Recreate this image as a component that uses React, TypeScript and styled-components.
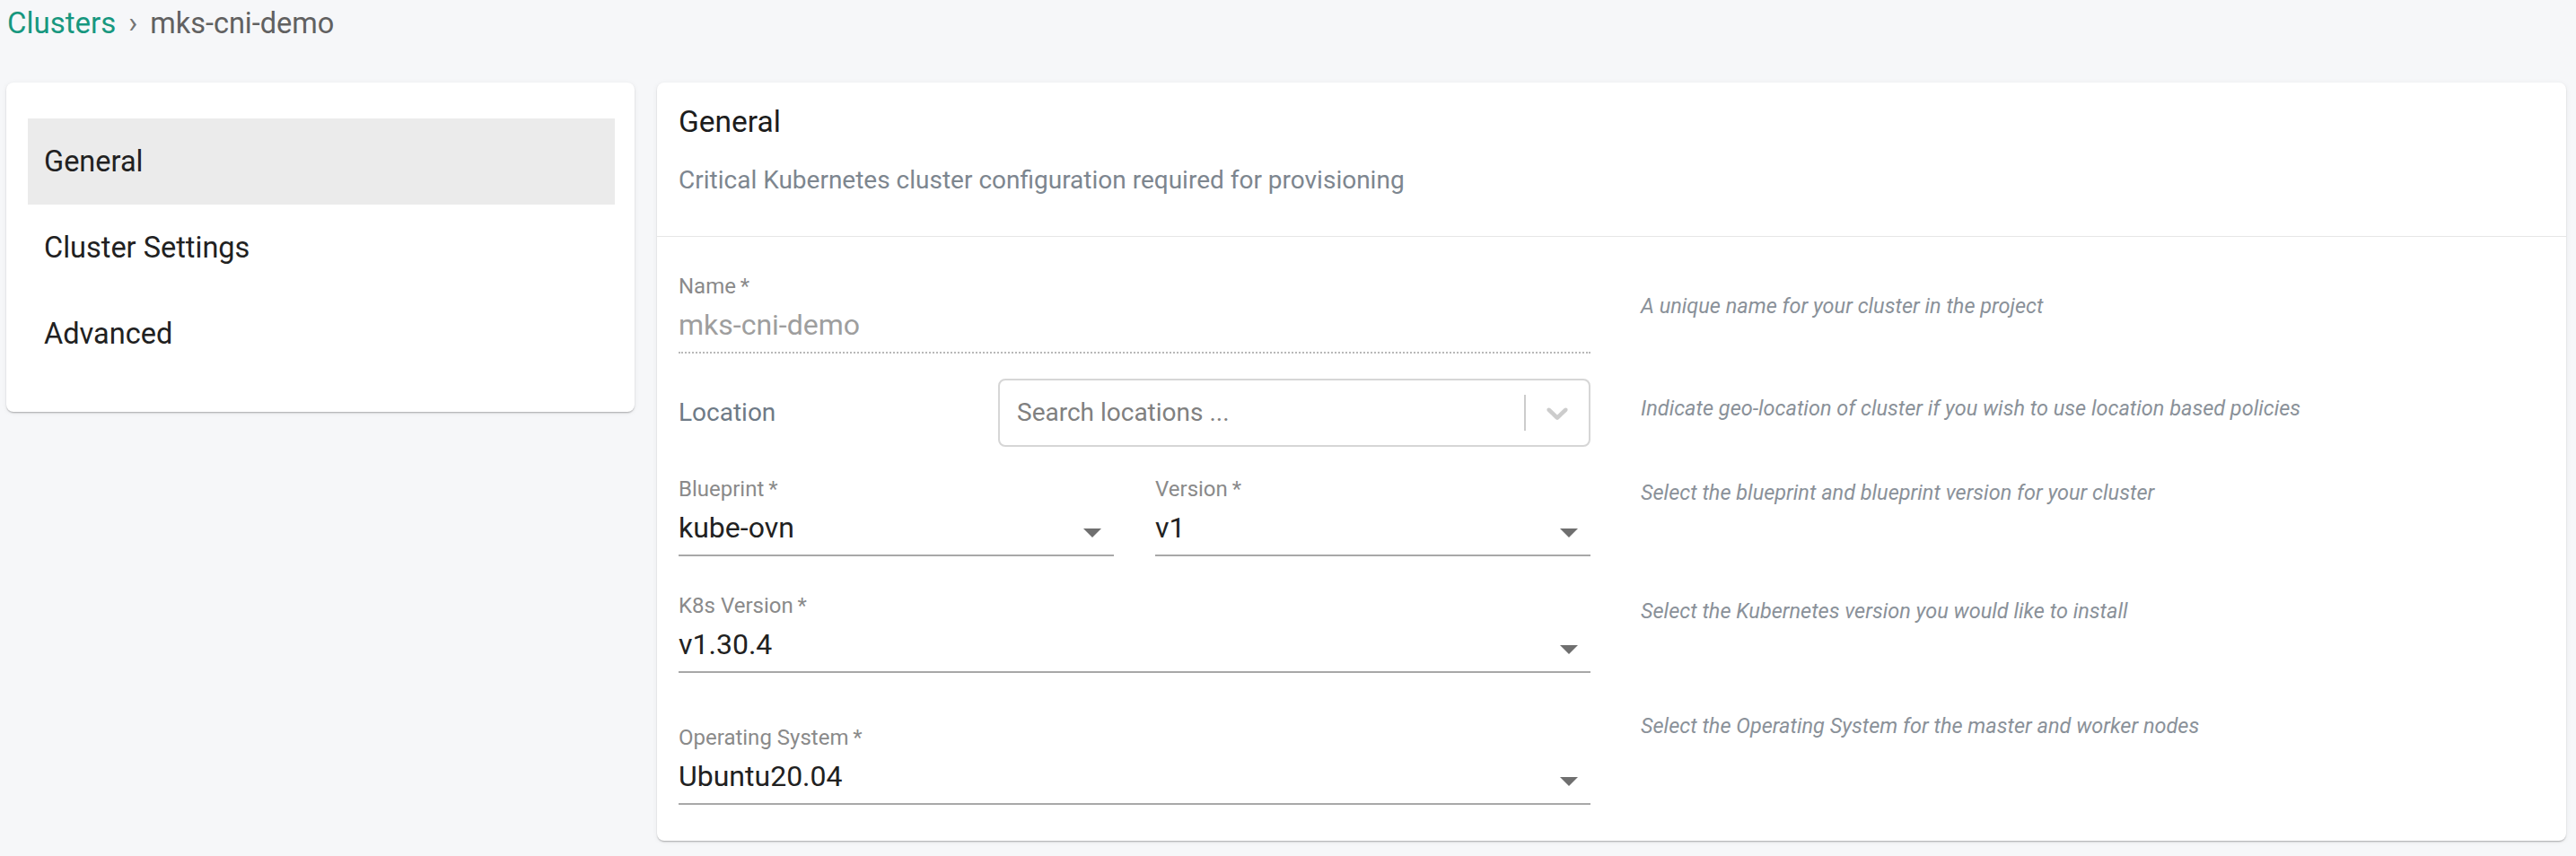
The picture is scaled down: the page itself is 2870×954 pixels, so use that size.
import React from "react";
import styled, { createGlobalStyle } from "styled-components";

const GlobalStyle = createGlobalStyle`
  html, body { margin: 0; padding: 0; background: #f6f7f9; }
  body { font-family: Roboto, "Liberation Sans", Arial, sans-serif; color: #212121; }
  * { box-sizing: border-box; }
`;

const Page = styled.div`
  min-height: 954px;
  padding: 6px 11px 0 7px;
`;

const Breadcrumbs = styled.nav`
  display: flex;
  align-items: center;
  font-size: 33px;
  line-height: 40px;
  padding-left: 1px;
`;

const Crumb = styled.a`
  color: #17977f;
  text-decoration: none;
`;

const Sep = styled.span`
  margin: 0 14px;
  color: #757575;
`;

const Current = styled.span`
  color: #616161;
  font-size: 32.5px;
`;

const Layout = styled.div`
  display: grid;
  grid-template-columns: 700px 1fr;
  column-gap: 25px;
  align-items: start;
  margin-top: 46px;
`;

const Card = styled.section`
  background: #fff;
  border-radius: 8px;
  box-shadow: 0 2px 2px -1px rgba(0, 0, 0, 0.2), 0 1px 2px 0 rgba(0, 0, 0, 0.12),
    0 1px 6px 0 rgba(0, 0, 0, 0.06);
`;

const SideNav = styled(Card)`
  display: flex;
  flex-direction: column;
  padding: 40px 22px 39px 24px;
`;

const NavItem = styled.div<{ $active?: boolean }>`
  height: 96px;
  line-height: 96px;
  padding-left: 18px;
  font-size: 32.5px;
  color: #212121;
  background: ${(p) => (p.$active ? "#ebebeb" : "transparent")};
`;

const Main = styled(Card)`
  display: flex;
  flex-direction: column;
`;

const Header = styled.header`
  padding: 24px 24px 46px;
  border-bottom: 1px solid #e6e6e6;
`;

const Title = styled.h2`
  margin: 0;
  font-size: 33.5px;
  line-height: 40px;
  font-weight: 400;
  color: #1c1c1c;
`;

const Subtitle = styled.p`
  margin: 29px 0 0;
  font-size: 28px;
  line-height: 32px;
  color: #7d868f;
`;

const Form = styled.div`
  padding: 41px 24px 40px;
  display: flex;
  flex-direction: column;
`;

const Row = styled.div<{ $mt: number }>`
  display: grid;
  grid-template-columns: 1016px 1fr;
  column-gap: 56px;
  align-items: start;
  margin-top: ${(p) => p.$mt}px;
`;

const Help = styled.p<{ $mt: number }>`
  margin: ${(p) => p.$mt}px 0 0;
  font-size: 23.5px;
  line-height: 28px;
  font-style: italic;
  color: #8a9199;
`;

const Field = styled.div<{ $mt?: number }>`
  display: flex;
  flex-direction: column;
  margin-top: ${(p) => p.$mt ?? 0}px;
`;

const FieldLabel = styled.label`
  font-size: 24px;
  line-height: 28px;
  color: #8a8a8a;
`;

const InputRow = styled.div<{ $disabled?: boolean }>`
  display: flex;
  align-items: flex-start;
  margin-top: 10px;
  height: 51px;
  border-bottom: 2px ${(p) => (p.$disabled ? "dotted #b8b8b8" : "solid #a8a8a8")};
`;

const Value = styled.span<{ $disabled?: boolean }>`
  flex: 1;
  font-size: 32px;
  line-height: 38px;
  color: ${(p) => (p.$disabled ? "#9e9e9e" : "#212121")};
`;

const ArrowIcon = styled.svg`
  width: 48px;
  height: 48px;
  flex: none;
  fill: #6f6f6f;
`;

const Pair = styled.div`
  display: grid;
  grid-template-columns: 1fr 1fr;
  column-gap: 46px;
`;

const LocationField = styled.div`
  display: grid;
  grid-template-columns: 356px 1fr;
  align-items: center;
`;

const LocLabel = styled.span`
  font-size: 28px;
  line-height: 32px;
  color: #6e7a86;
`;

const SelectBox = styled.div`
  height: 76px;
  border: 2px solid #d6d6d6;
  border-radius: 8px;
  display: flex;
  align-items: center;
`;

const Placeholder = styled.span`
  flex: 1;
  padding-left: 19px;
  font-size: 28px;
  line-height: 32px;
  color: #808080;
`;

const Separator = styled.span`
  width: 2px;
  align-self: stretch;
  margin: 16px 0;
  background: #cccccc;
`;

const Indicator = styled.span`
  width: 70px;
  display: flex;
  justify-content: center;
  align-items: center;
  svg {
    width: 40px;
    height: 40px;
    fill: #cccccc;
  }
`;

const DropArrow = () => (
  <ArrowIcon viewBox="0 0 24 24" aria-hidden>
    <path d="M7 10l5 5 5-5z" />
  </ArrowIcon>
);

type SelectProps = { label: string; value: string; disabled?: boolean; mt?: number };

const SelectField = ({ label, value, disabled, mt }: SelectProps) => (
  <Field $mt={mt}>
    <FieldLabel>{label}</FieldLabel>
    <InputRow $disabled={disabled}>
      <Value $disabled={disabled}>{value}</Value>
      {!disabled && <DropArrow />}
    </InputRow>
  </Field>
);

export default function App() {
  return (
    <>
      <GlobalStyle />
      <Page>
        <Breadcrumbs>
          <Crumb href="#">Clusters</Crumb>
          <Sep>›</Sep>
          <Current>mks-cni-demo</Current>
        </Breadcrumbs>
        <Layout>
          <SideNav>
            <NavItem $active>General</NavItem>
            <NavItem>Cluster Settings</NavItem>
            <NavItem>Advanced</NavItem>
          </SideNav>
          <Main>
            <Header>
              <Title>General</Title>
              <Subtitle>Critical Kubernetes cluster configuration required for provisioning</Subtitle>
            </Header>
            <Form>
              <Row $mt={0}>
                <SelectField label={"Name\u2009*"} value="mks-cni-demo" disabled />
                <Help $mt={22}>A unique name for your cluster in the project</Help>
              </Row>
              <Row $mt={28}>
                <LocationField>
                  <LocLabel>Location</LocLabel>
                  <SelectBox>
                    <Placeholder>Search locations ...</Placeholder>
                    <Separator />
                    <Indicator>
                      <svg viewBox="0 0 20 20" aria-hidden>
                        <path d="M4.516 7.548c0.436-0.446 1.043-0.481 1.576 0l3.908 3.747 3.908-3.747c0.533-0.481 1.141-0.446 1.574 0 0.436 0.445 0.408 1.197 0 1.615-0.406 0.418-4.695 4.502-4.695 4.502-0.217 0.223-0.502 0.335-0.787 0.335s-0.57-0.112-0.789-0.335c0 0-4.287-4.084-4.695-4.502s-0.436-1.17 0-1.615z" />
                      </svg>
                    </Indicator>
                  </SelectBox>
                </LocationField>
                <Help $mt={19}>Indicate geo-location of cluster if you wish to use location based policies</Help>
              </Row>
              <Row $mt={33}>
                <Pair>
                  <SelectField label={"Blueprint\u2009*"} value="kube-ovn" />
                  <SelectField label={"Version\u2009*"} value="v1" />
                </Pair>
                <Help $mt={4}>Select the blueprint and blueprint version for your cluster</Help>
              </Row>
              <Row $mt={41}>
                <SelectField label={"K8s Version\u2009*"} value="v1.30.4" />
                <Help $mt={6}>Select the Kubernetes version you would like to install</Help>
              </Row>
              <Row $mt={45}>
                <SelectField label={"Operating System\u2009*"} value="Ubuntu20.04" mt={13} />
                <Help $mt={0}>Select the Operating System for the master and worker nodes</Help>
              </Row>
            </Form>
          </Main>
        </Layout>
      </Page>
    </>
  );
}
